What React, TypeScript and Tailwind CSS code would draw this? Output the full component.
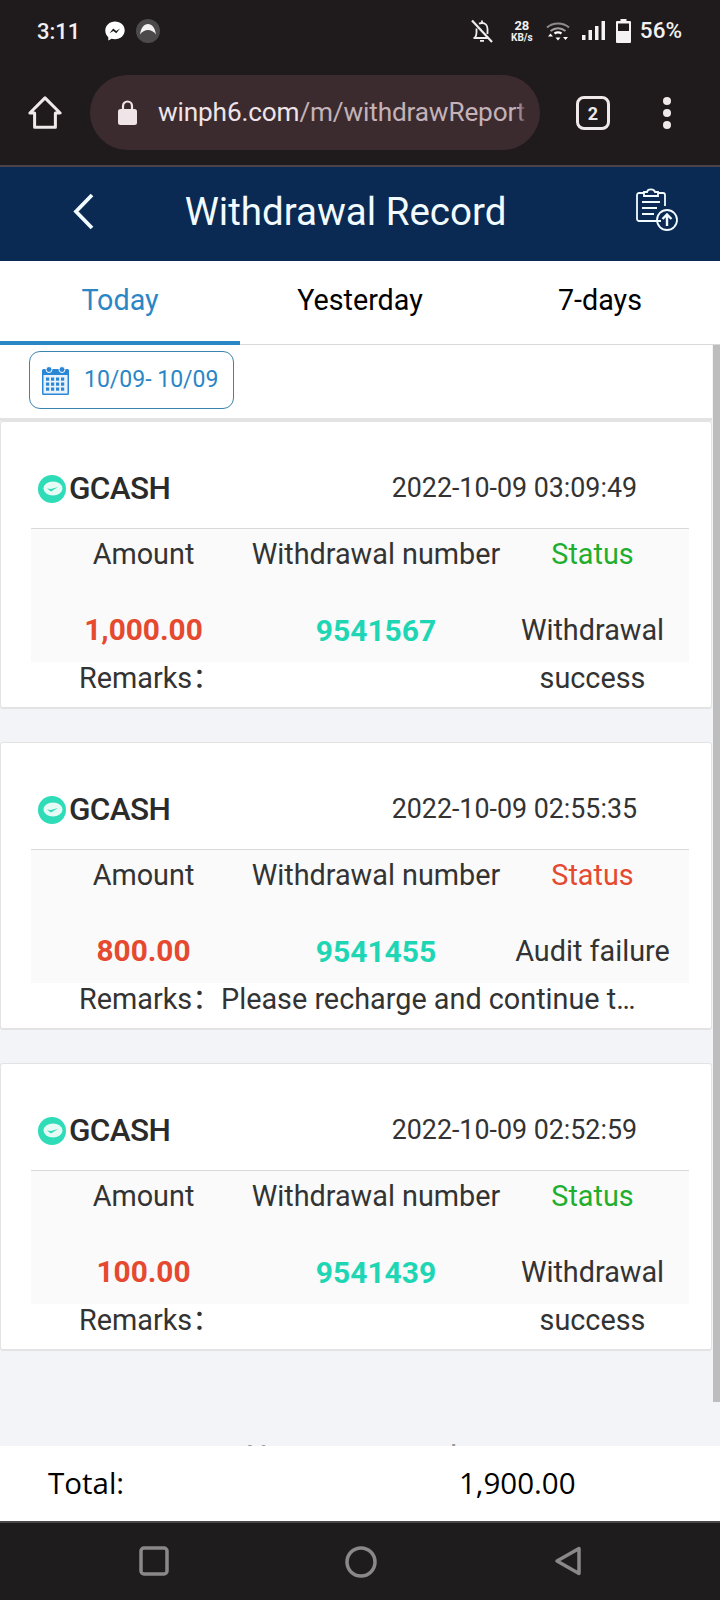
const records = [
  { time: "2022-10-09 03:09:49", amount: "1,000.00", num: "9541567", failed: false, status: "Withdrawal", more: "success", remark: "" },
  { time: "2022-10-09 02:55:35", amount: "800.00", num: "9541455", failed: true, status: "Audit failure", more: "", remark: "Please recharge and continue t…" },
  { time: "2022-10-09 02:52:59", amount: "100.00", num: "9541439", failed: false, status: "Withdrawal", more: "success", remark: "" },
];

function StatusBar() {
  return (
    <div className="h-[62px] flex items-center pl-[37px] pr-[38px] text-white">
      <span className="text-[22px] font-medium w-[68px] text-[#f2f0f0]">3:11</span>
      <svg className="w-[20px] h-[20px]" viewBox="0 0 20 20">
        <path d="M10 .5C4.500 .5 .3 4.500 .3 9.600c0 2.700 1.100 5 3 6.600v3.400l3.200-1.800c1.100 .3 2.300 .5 3.500 .5 5.500 0 9.700-4 9.700-9S15.500 .5 10 .5z" fill="#fff" />
        <path d="M4.500 12.300l3.700-4.700 3 2.300 3.800-2.300-3.700 4.700-3-2.300z" fill="#1f1b1c" />
      </svg>
      <svg className="w-[24px] h-[24px] ml-[11px]" viewBox="0 0 24 24">
        <circle cx="12" cy="12" r="12" fill="#4c4a4a" />
        <path d="M4 15.500C5 9 8 5 12 5s7 4 8 10.500C18 12.500 15 11 12 11s-6 1.500-8 4.500z" fill="#f4f2f2" />
      </svg>
      <div className="ml-auto flex items-center">
        <svg className="w-[24px] h-[24px] mr-[1px]" viewBox="0 0 24 24" fill="none" stroke="#eeeeee" strokeWidth="1.800">
          <path d="M5 18.500c1.300-1.500 1.500-3 1.500-5V9.500M9 4.800C10 4.200 11 4 12 4c3.200 0 5.500 2.500 5.500 6v5" />
          <path d="M3.500 19H19M10 21.800h4M12 4V1.500" />
          <path d="M2 1.500l20 21.500" strokeWidth="2.200" />
        </svg>
        <div className="w-[26px] ml-[14px] flex flex-col items-center leading-none text-[#f2f0f0] font-bold">
          <span className="text-[13px] leading-[13px]">28</span>
          <span className="text-[10px] leading-[11px]">KB/s</span>
        </div>
        <svg className="w-[24px] h-[20px] ml-[11px]" viewBox="0 0 24 20" fill="none">
          <path d="M1 6.500C7 1.200 17 1.200 23 6.500" stroke="#8c8a8a" strokeWidth="2" />
          <path d="M4.500 10C9 6.300 15 6.300 19.500 10" stroke="#a09e9e" strokeWidth="2" />
          <path d="M8.500 12.500c2-1.400 5-1.400 7 0" stroke="#fff" strokeWidth="2.200" />
          <path d="M12 19.500l-2.500-3h5zM2 15.500l2.500-3 2.500 3zM17 16l2.500 3 2.500-3z" fill="#fff" />
        </svg>
        <svg className="w-[23px] h-[20px] ml-[12px]" viewBox="0 0 23 20" fill="#f4f2f2">
          <rect x="0" y="14" width="3.500" height="5" />
          <rect x="6.500" y="9" width="3.500" height="10" />
          <rect x="13" y="5" width="3.500" height="14" />
          <rect x="19.500" y="0" width="3.500" height="19" />
        </svg>
        <svg className="w-[15px] h-[24px] ml-[11px]" viewBox="0 0 15 24">
          <path d="M4.500 0h6v2H14a1 1 0 0 1 1 1v20a1 1 0 0 1-1 1H1a1 1 0 0 1-1-1V3a1 1 0 0 1 1-1h3.500z" fill="#f4f2f2" />
          <rect x="2" y="4.500" width="11" height="7.500" fill="#1f1b1c" />
        </svg>
        <span className="text-[22.500px] font-medium ml-[9px] text-[#f2f0f0]">56%</span>
      </div>
    </div>
  );
}

function BrowserBar() {
  return (
    <div className="h-[105px] flex items-start pt-[13px] border-b-2 border-[#4a444a]">
      <svg className="w-[34px] h-[34px] ml-[28px] mt-[21px]" viewBox="0 0 36 36" fill="none" stroke="#efe9ea" strokeWidth="3.200" strokeLinejoin="round">
        <path d="M2 18L18 2l16 16h-5v15H7V18z" />
      </svg>
      <div className="w-[450px] h-[75px] ml-[28px] rounded-full bg-[#3b2b2f] flex items-center pl-[28px] pr-[14px]">
        <svg className="w-[19px] h-[25px] shrink-0" viewBox="0 0 19 25">
          <path d="M5 10V6a4.500 4.500 0 0 1 9 0v4" fill="none" stroke="#efe4e8" strokeWidth="2.200" />
          <rect x="0" y="9" width="19" height="16" rx="2.500" fill="#efe4e8" />
        </svg>
        <div className="relative ml-[21px] flex-1 overflow-hidden whitespace-nowrap text-[26.200px] tracking-[-0.15px]">
          <span className="text-[#efe4e8]">winph6.com</span>
          <span className="text-[#c4b2b8]">/m/withdrawReport</span>
          <div className="absolute right-0 top-0 bottom-0 w-[8px] bg-gradient-to-l from-[#3b2b2f] to-transparent" />
        </div>
      </div>
      <div className="w-[34px] h-[34px] ml-[36px] mt-[21px] rounded-[8px] border-[3px] border-[#efe9ea] flex items-center justify-center text-[#efe9ea] text-[18px] font-bold">
        2
      </div>
      <div className="ml-[53px] mt-[22px] flex flex-col gap-[4px]">
        <div className="w-[8px] h-[8px] rounded-full bg-[#efe9ea]" />
        <div className="w-[8px] h-[8px] rounded-full bg-[#efe9ea]" />
        <div className="w-[8px] h-[8px] rounded-full bg-[#efe9ea]" />
      </div>
    </div>
  );
}

function AppHeader() {
  return (
    <div className="relative h-[94px] bg-[#0a2a54] flex items-center justify-center pb-[4px] text-[#f2fbff]">
      <svg className="absolute left-[72px] top-[26px] w-[22px] h-[37px]" viewBox="0 0 22 37" fill="none" stroke="#f2fbff" strokeWidth="3.800">
        <path d="M20 2L4 18.500 20 35" />
      </svg>
      <span className="text-[38.500px] mr-[29px]">Withdrawal Record</span>
      <svg className="absolute left-[635px] top-[21px] w-[44px] h-[44px]" viewBox="0 0 44 44" fill="none" stroke="#f2fbff" strokeWidth="1.800">
        <path d="M26 33H4a2 2 0 0 1-2-2V7a2 2 0 0 1 2-2h5M23 5h5a2 2 0 0 1 2 2v11" />
        <path d="M9 8V4h3c.6-3.500 7-3.500 8 0h3v4z" />
        <path d="M7 14h18M7 20h15M7 26h12" />
        <circle cx="32" cy="32" r="10" />
        <path d="M32 38V26.500M27.500 31l4.500-4.500 4.500 4.500" strokeWidth="2.400" />
      </svg>
    </div>
  );
}

function Tabs() {
  return (
    <div className="h-[84px] bg-white grid grid-cols-3 text-[28.700px] border-b border-[#d9d9d9] text-black">
      <div className="h-[84px] border-b-4 border-[#2b86c5] text-[#2b86c5] flex items-center justify-center">Today</div>
      <div className="flex items-center justify-center pb-[4px]">Yesterday</div>
      <div className="flex items-center justify-center pb-[4px]">7-days</div>
    </div>
  );
}

function CalendarIcon() {
  return (
    <svg className="w-[27px] h-[29px]" viewBox="0 0 27 29">
      <path d="M1.500 3H25.500A1.500 1.500 0 0 1 27 4.500V27.500A1.500 1.500 0 0 1 25.500 29H1.500A1.500 1.500 0 0 1 0 27.500V4.500A1.500 1.500 0 0 1 1.500 3Z" fill="#2b86d5" />
      <rect x="1.500" y="9" width="24" height="18.500" fill="#e8f2fb" />
      <circle cx="7" cy="3.500" r="3" fill="#2b86d5" stroke="#fff" strokeWidth="1" />
      <circle cx="20" cy="3.500" r="3" fill="#2b86d5" stroke="#fff" strokeWidth="1" />
      <g fill="#2b86d5">
        <rect x="4" y="11.500" width="3.200" height="3.200" /><rect x="9" y="11.500" width="3.200" height="3.200" /><rect x="14" y="11.500" width="3.200" height="3.200" /><rect x="19" y="11.500" width="3.200" height="3.200" />
        <rect x="4" y="16.500" width="3.200" height="3.200" /><rect x="9" y="16.500" width="3.200" height="3.200" /><rect x="14" y="16.500" width="3.200" height="3.200" /><rect x="19" y="16.500" width="3.200" height="3.200" />
        <rect x="4" y="21.500" width="3.200" height="3.200" /><rect x="9" y="21.500" width="3.200" height="3.200" /><rect x="14" y="21.500" width="3.200" height="3.200" /><rect x="19" y="21.500" width="3.200" height="3.200" />
      </g>
    </svg>
  );
}

function GcashIcon() {
  return (
    <svg className="w-[28px] h-[28px]" viewBox="0 0 28 28">
      <circle cx="14" cy="14" r="14" fill="#2fdcb8" />
      <ellipse cx="15" cy="13.500" rx="9.500" ry="7" fill="#e6fbf5" />
      <path d="M9 13.500l4 3 7-4.500-7 2z" fill="#2fdcb8" />
    </svg>
  );
}

function RecordCard({ r }: { r: (typeof records)[number] }) {
  return (
    <div className="h-[288px] bg-white border border-[#e3e3e3] border-b-2 rounded-[3px] mr-[8px] pl-[30px] pr-[22px]">
      <div className="h-[107px] border-b border-[#d9d9d9] flex items-center justify-between pt-[27px] pl-[7px] pr-[52px]">
        <div className="flex items-center gap-[3px]">
          <GcashIcon />
          <span className="text-[31.500px] font-medium text-[#2b2b2b] tracking-[-0.6px]">GCASH</span>
        </div>
        <span className="text-[26.800px] text-[#333]">{r.time}</span>
      </div>
      <div className="h-[133px] bg-[#fafafa] grid grid-cols-[225px_240px_193px] grid-rows-[52px_81px] text-center text-[28.800px] text-[#333]">
        <div className="flex items-center justify-center">Amount</div>
        <div className="flex items-center justify-center whitespace-nowrap">Withdrawal number</div>
        <div className={`flex items-center justify-center ${r.failed ? "text-[#e5492f]" : "text-[#1fae2e]"}`}>Status</div>
        <div className="flex items-center justify-center font-bold text-[#e5492f] text-[29.800px] pt-[18px]">{r.amount}</div>
        <div className="flex items-center justify-center font-bold text-[#1fd6b4] text-[30px] pt-[18px]">{r.num}</div>
        <div className="flex items-center justify-center pt-[18px] whitespace-nowrap">{r.status}</div>
      </div>
      <div className="h-[33px] flex items-center text-[28.800px] text-[#333] whitespace-nowrap pl-[48px] font-['Roboto','Noto_Sans_CJK_SC',sans-serif]">
        <span className="w-[142px]">Remarks：</span>
        <span>{r.remark}</span>
        {r.more && <span className="ml-auto w-[193px] text-center">{r.more}</span>}
      </div>
    </div>
  );
}

export default function App() {
  return (
    <div className="w-[720px] h-[1600px] overflow-hidden flex flex-col font-['Roboto',sans-serif] bg-[#f3f4f8]">
      <div className="bg-[#1f1b1c]">
        <StatusBar />
        <BrowserBar />
      </div>
      <AppHeader />
      <Tabs />
      <div className="relative h-[1101px] overflow-hidden">
        {/* Scroll thumb */}
        <div className="absolute right-0 top-0 w-[7px] h-[1057px] bg-[#bdbdbd]" />
        <div className="h-[76px] bg-white border-b-3 border-[#e3e3e3] mr-[8px] pt-[6px] pl-[29px]">
          <div className="w-[205px] h-[58px] border border-[#3a85b0] rounded-[11px] flex items-center pl-[12px] text-[23px] text-[#2b86c5]">
            <CalendarIcon />
            <span className="ml-[15px]">10/09- 10/09</span>
          </div>
        </div>
        <div className="flex flex-col gap-[33px]">
          {records.map((r) => (
            <RecordCard key={r.num} r={r} />
          ))}
        </div>
        {/* Cut off by the total bar, as in the scrolled page */}
        <div className="mt-[83px] pr-[17px] text-center text-[30.500px] text-[#999]">No more record</div>
      </div>
      <div className="h-[75px] bg-white flex items-center text-[29.500px] text-black font-['Open_Sans',sans-serif]">
        <span className="w-[459px] pl-[48px]">Total:</span>
        <span>1,900.00</span>
      </div>
      <div className="h-[79px] bg-[#1f1c1d] border-t-2 border-[#4a4849] relative">
        <svg className="absolute left-[139px] top-[23px] w-[30px] h-[30px]" viewBox="0 0 30 30" fill="none" stroke="#8a8888" strokeWidth="3.500">
          <rect x="2" y="2" width="26" height="26" rx="3" />
        </svg>
        <svg className="absolute left-[345px] top-[23px] w-[32px] h-[32px]" viewBox="0 0 32 32" fill="none" stroke="#8a8888" strokeWidth="3.500">
          <circle cx="16" cy="16" r="14" />
        </svg>
        <svg className="absolute left-[554px] top-[23px] w-[28px] h-[30px]" viewBox="0 0 28 30" fill="none" stroke="#8a8888" strokeWidth="3.500" strokeLinejoin="round">
          <path d="M25 2.500V27.500L3 15z" />
        </svg>
      </div>
    </div>
  );
}
